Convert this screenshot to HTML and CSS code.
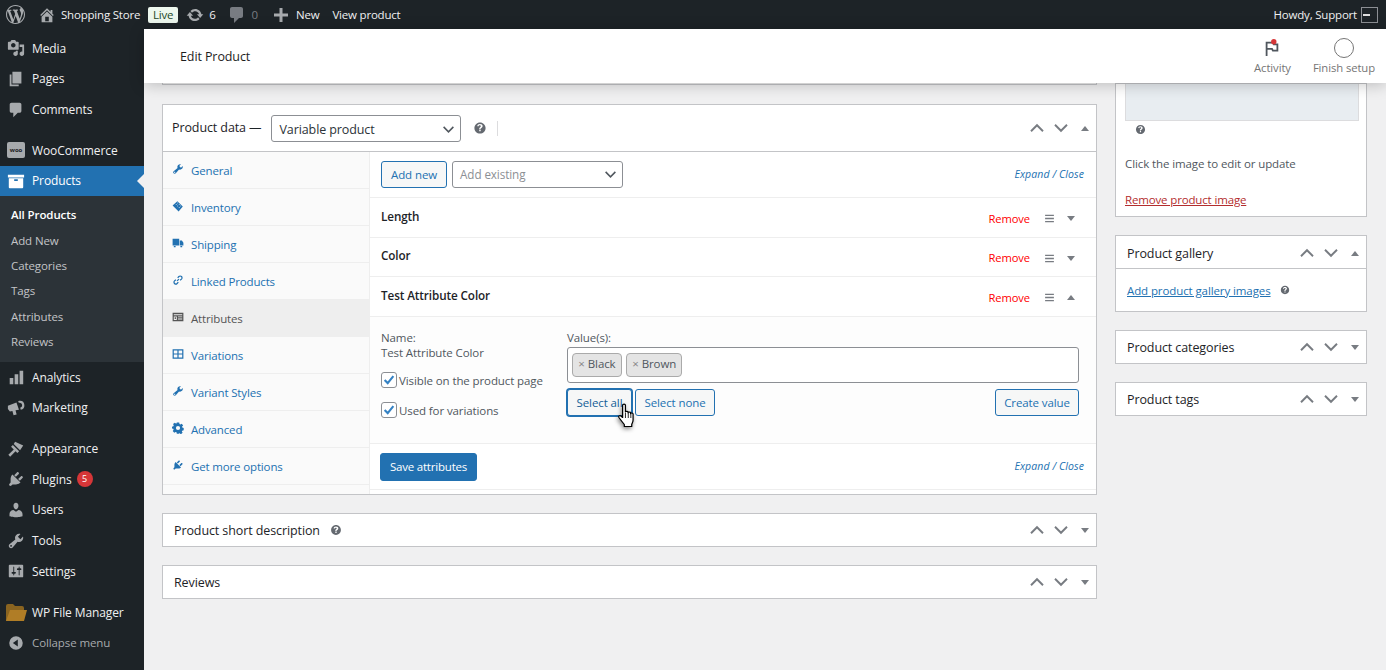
FILE: index.html
```html
<!DOCTYPE html>
<html lang="en">
  <head>
    <meta charset="UTF-8" />
    <meta name="viewport" content="width=device-width, initial-scale=1.0" />
    <title>Edit Product</title>
    <link rel="stylesheet" href="styles.css">
  </head>
  <body>
    <svg class="sprite" xmlns="http://www.w3.org/2000/svg">
      <symbol id="i-wp" viewBox="0 0 20 20"><path fill-rule="evenodd" d="M20 10c0-5.510-4.490-10-10-10C4.480 0 0 4.490 0 10c0 5.520 4.480 10 10 10 5.510 0 10-4.480 10-10zM7.780 15.370L4.370 6.220c.55-.02 1.170-.08 1.170-.08.5-.06.44-1.130-.06-1.110 0 0-1.450.11-2.370.11-.18 0-.37 0-.58-.01C4.120 2.690 6.890 1.110 10 1.110c2.330 0 4.450.87 6.050 2.340-.68-.11-1.650.39-1.650 1.580 0 .74.45 1.360.9 2.100.35.61.55 1.360.55 2.460 0 1.490-1.400 5-1.400 5l-3.030-8.370c.54-.02.82-.17.82-.17.5-.05.44-1.250-.06-1.220 0 0-1.440.12-2.380.12-.87 0-2.330-.12-2.330-.12-.5-.03-.56 1.200-.06 1.220l.92.08 1.260 3.410zM17.410 10c.24-.64.74-1.870.43-4.250.7 1.290 1.050 2.710 1.050 4.250 0 3.290-1.730 6.240-4.400 7.780.97-2.590 1.940-5.200 2.920-7.780zM6.100 18.090C3.120 16.650 1.110 13.530 1.110 10c0-1.300.23-2.480.72-3.590C3.250 10.300 4.670 14.200 6.100 18.090zm4.030-6.630l2.580 6.980c-.86.29-1.760.45-2.710.45-.79 0-1.570-.11-2.290-.33.81-2.380 1.620-4.740 2.420-7.100z"/></symbol>
      <symbol id="i-home" viewBox="0 0 20 20"><path fill-rule="evenodd" d="M16 8.500l1.530 1.530-1.060 1.060L10 4.620l-6.470 6.470-1.060-1.060L10 2.500l4 4v-2h2v4zm-6-2.460l6 5.990V18H4v-5.970zM12 17v-5H8v5h4z"/></symbol>
      <symbol id="i-update" viewBox="0 0 20 20"><path d="M10.200 3.280c3.530 0 6.430 2.610 6.920 6h2.080l-3.500 4-3.500-4h2.320c-.45-1.970-2.210-3.440-4.320-3.440-1.450 0-2.730.71-3.540 1.780L4.950 5.660C6.230 4.200 8.110 3.280 10.200 3.280zm-.4 13.440c-3.520 0-6.430-2.610-6.920-6H.8l3.500-4c1.170 1.330 2.330 2.670 3.500 4H5.480c.45 1.970 2.210 3.440 4.320 3.440 1.450 0 2.730-.71 3.540-1.780l1.710 1.950c-1.280 1.460-3.150 2.390-5.250 2.390z"/></symbol>
      <symbol id="i-comment" viewBox="0 0 20 20"><path d="M5 2h9c1.100 0 2 .9 2 2v7c0 1.100-.9 2-2 2h-2l-5 5v-5H5c-1.100 0-2-.9-2-2V4c0-1.100.9-2 2-2z"/></symbol>
      <symbol id="i-plus" viewBox="0 0 20 20"><path d="M17 8.500v3h-5.500V17h-3v-5.500H3v-3h5.500V3h3v5.500H17z"/></symbol>
      <symbol id="i-media" viewBox="0 0 20 20"><path fill-rule="evenodd" d="M13 11V4c0-.55-.45-1-1-1h-1.670L9 1H5L3.670 3H2c-.55 0-1 .45-1 1v7c0 .55.45 1 1 1h10c.55 0 1-.45 1-1zM7 4.500c1.380 0 2.500 1.120 2.500 2.500S8.380 9.500 7 9.500 4.500 8.380 4.500 7 5.620 4.500 7 4.500zM14 6h5v10.500c0 1.380-1.120 2.500-2.500 2.500S14 17.880 14 16.500s1.120-2.500 2.500-2.500c.17 0 .34.020.5.050V9h-3V6zm-4 8.050V13h2v3.500c0 1.380-1.120 2.500-2.500 2.500S7 17.880 7 16.500 8.120 14 9.500 14c.17 0 .34.020.5.050z"/></symbol>
      <symbol id="i-pages" viewBox="0 0 20 20"><path d="M6 15V2h10v13H6zm-1 1h8v2H3V5h2v11z"/></symbol>
      <symbol id="i-archive" viewBox="0 0 20 20"><path fill-rule="evenodd" d="M19 3H1v3h18V3zM2 7v10c0 .6.4 1 1 1h14c.6 0 1-.4 1-1V7H2zm10 3H8V8h4v2z"/></symbol>
      <symbol id="i-analytics" viewBox="0 0 20 20"><path d="M3 11h4v7H3zM8.500 7h4v11h-4zM14 3h4v15h-4z"/></symbol>
      <symbol id="i-marketing" viewBox="0 0 20 20"><path fill-rule="evenodd" d="M1 7.500l9.500-3.700 2.800 8.200-3.800.6 1.200 4.600-3.400.8-1.300-4.700-2.800.5L1 11V7.500zM14.500 2a5 5 0 0 1 .8 9.900l-.6-2.100a2.900 2.900 0 0 0-.5-5.700c-.4 0-.8.100-1.100.2l-.7-1.800c.6-.3 1.300-.5 2.100-.5z"/></symbol>
      <symbol id="i-brush" viewBox="0 0 20 20"><path d="M14.500 11.500L7.500 4.500 9 2l9 4-3.500 5.500zM6.500 5.500l7 7-2 2-2-2-6 6-2-2 6-6-3-3 2-2z"/></symbol>
      <symbol id="i-plugin" viewBox="0 0 20 20"><path d="M13.110 4.360L9.870 7.600 8 5.730l3.240-3.240c.35-.34 1.050-.2 1.560.32.52.51.66 1.210.31 1.550zm-8 1.770l.91-1.120 9.010 9.010-1.190.84c-.71.71-2.630 1.160-3.820 1.160H6.140L4.900 17.260c-.59.59-1.540.59-2.120 0-.59-.58-.59-1.530 0-2.120l1.240-1.240v-3.880c0-1.130.4-3.100 1.090-3.890zm7.260 3.970l3.240-3.240c.34-.35 1.040-.21 1.550.31.52.51.66 1.210.31 1.550l-3.240 3.250z"/></symbol>
      <symbol id="i-users" viewBox="0 0 20 20"><path d="M10 9.250c-2.270 0-2.730-3.440-2.730-3.440C7 4.020 7.820 2 9.970 2c2.160 0 2.980 2.020 2.710 3.810 0 0-.41 3.440-2.680 3.440zm0 2.570L12.720 10c2.390 0 4.520 2.330 4.520 4.530v2.490s-3.650 1.130-7.240 1.130c-3.650 0-7.240-1.130-7.240-1.130v-2.490c0-2.250 1.940-4.480 4.470-4.480z"/></symbol>
      <symbol id="i-tools" viewBox="0 0 20 20"><path fill-rule="evenodd" d="M16.680 9.770c-1.340 1.340-3.300 1.670-4.950.99l-5.410 6.520c-.99.99-2.590.99-3.580 0s-.99-2.590 0-3.580l6.520-5.420c-.68-1.650-.35-3.610.99-4.950 1.280-1.280 3.120-1.620 4.720-1.060l-2.890 2.890 2.820 2.820 2.860-2.870c.53 1.580.18 3.390-1.080 4.660zM3.810 16.210c.4.390 1.040.39 1.430 0 .4-.4.4-1.040 0-1.430-.39-.4-1.030-.4-1.430 0-.39.39-.39 1.030 0 1.430z"/></symbol>
      <symbol id="i-settings" viewBox="0 0 20 20"><path fill-rule="evenodd" d="M18 16V4c0-.55-.45-1-1-1H3c-.55 0-1 .45-1 1v12c0 .55.45 1 1 1h14c.55 0 1-.45 1-1zM8 11h1c.55 0 1 .45 1 1s-.45 1-1 1H8v1.500c0 .28-.22.5-.5.5s-.5-.22-.5-.5V13H6c-.55 0-1-.45-1-1s.45-1 1-1h1V5.500c0-.28.22-.5.5-.5s.5.22.5.5V11zm5-2h-1c-.55 0-1-.45-1-1s.45-1 1-1h1V5.500c0-.28.22-.5.5-.5s.5.22.5.5V7h1c.55 0 1 .45 1 1s-.45 1-1 1h-1v5.500c0 .28-.22.5-.5.5s-.5-.22-.5-.5V9z"/></symbol>
      <symbol id="i-collapse" viewBox="0 0 20 20"><path fill-rule="evenodd" d="M10 2.500a7.500 7.500 0 1 0 0 15 7.500 7.500 0 0 0 0-15zM12 6v8L6.500 10 12 6z"/></symbol>
      <symbol id="i-help" viewBox="0 0 20 20"><path fill-rule="evenodd" d="M17 10c0-3.870-3.140-7-7-7-3.870 0-7 3.130-7 7 0 3.860 3.130 7 7 7 3.860 0 7-3.140 7-7zm-6.300 1.480H9.060v-.48c0-.43.06-.78.2-1.050.13-.27.4-.58.8-.93.4-.33.64-.55.73-.66.14-.18.2-.39.2-.6 0-.3-.12-.55-.36-.76-.23-.21-.54-.32-.94-.32-.38 0-.69.11-.94.32-.25.2-.42.52-.51.94l-1.660-.21c.05-.76.37-1.410.97-1.950.6-.54 1.390-.81 2.370-.81 1.020 0 1.840.27 2.450.8.6.54.9 1.170.9 1.880 0 .4-.11.77-.34 1.120-.22.35-.7.83-1.430 1.440-.38.32-.62.57-.71.76-.1.19-.14.53-.13 1.020zM9.060 14.130V12.300h1.820v1.830H9.060z"/></symbol>
      <symbol id="i-inventory" viewBox="0 0 20 20"><path fill-rule="evenodd" d="M1 9l8-7 9 9-7 8-10-10zM6 7.500l1 1 1-1-1-1-1 1zm2.500 2.500l1 1 1-1-1-1-1 1zm2.500 2.500l1 1 1-1-1-1-1 1zM8.500 5l1 1 1-1-1-1-1 1zm2.500 2.500l1 1 1-1-1-1-1 1zm2.500 2.500l1 1 1-1-1-1-1 1z"/></symbol>
      <symbol id="i-truck" viewBox="0 0 20 20"><path d="M1 3h11v11H1zM13 6h3.500L19 9.500V14h-6zM3 15h3v2H3zM14 15h3v2h-3z"/></symbol>
      <symbol id="i-link" viewBox="0 0 20 20"><path fill="none" stroke="currentColor" stroke-width="2" d="M8.500 11.500l3-3M9.500 6.500l2-2.300a3 3 0 0 1 4.300 4.300l-2.300 2M10.500 13.500l-2 2.300a3 3 0 0 1-4.300-4.300l2.300-2"/></symbol>
      <symbol id="i-attr" viewBox="0 0 20 20"><path fill-rule="evenodd" d="M1 3h18v14H1V3zm2 2.500V7h14V5.500H3zM3 9v6h5V9H3zm7 0v1.500h7V9h-7zm0 3.500V14h7v-1.500h-7zM4.500 10.500h2v3h-2z"/></symbol>
      <symbol id="i-grid" viewBox="0 0 20 20"><path fill-rule="evenodd" d="M1 2h18v16H1V2zm2 2v5h6V4H3zm8 0v5h6V4h-6zM3 11v5h6v-5H3zm8 0v5h6v-5h-6z"/></symbol>
      <symbol id="i-gear" viewBox="0 0 20 20"><path fill-rule="evenodd" d="M8 1h4l.5 2.500 1.500.7 2.200-1.300 2.400 3-1.800 1.800.3 1.600 2.400.8v3.600l-2.500.7-.6 1.500 1.300 2.200-3 2.400-1.800-1.700-1.600.4L12 19.500H8l-.5-2.300-1.600-.7-2.100 1.300-2.600-3 1.500-1.800-.5-1.600L0 11V8l2.300-.8.6-1.600L1.700 3.500l3-2.400 1.800 1.500 1-.3L8 1zm2 5.500a3.500 3.500 0 1 0 0 7 3.500 3.500 0 0 0 0-7z"/></symbol>
      <symbol id="i-chev-up" viewBox="0 0 20 20"><path fill="none" stroke="currentColor" stroke-width="2.400" d="M2.500 14l7.500-7.500 7.500 7.500"/></symbol>
      <symbol id="i-chev-down" viewBox="0 0 20 20"><path fill="none" stroke="currentColor" stroke-width="2.400" d="M2.500 6l7.500 7.500 7.500-7.500"/></symbol>
      <symbol id="i-bars" viewBox="0 0 20 20"><path d="M2 3h16v2.600H2zM2 8.700h16v2.600H2zM2 14.400h16V17H2z"/></symbol>
    </svg>

    <header class="adminbar">
      <div class="bar-left">
        <svg class="bar-wp"><use href="#i-wp"/></svg>
        <a class="bar-item site"><svg class="bar-icon small"><use href="#i-home"/></svg>Shopping Store</a>
        <span class="live">Live</span>
        <a class="bar-item updates"><svg class="bar-icon small"><use href="#i-update"/></svg>6</a>
        <a class="bar-item dim"><svg class="bar-icon"><use href="#i-comment"/></svg>0</a>
        <a class="bar-item new"><svg class="bar-icon"><use href="#i-plus"/></svg>New</a>
        <a class="bar-item">View product</a>
      </div>
      <div class="bar-right">Howdy, Support <span class="avatar"><i></i></span></div>
    </header>

    <div class="layout">
      <nav class="sidebar">
        <a class="menu-item"><svg><use href="#i-media"/></svg>Media</a>
        <a class="menu-item"><svg><use href="#i-pages"/></svg>Pages</a>
        <a class="menu-item"><svg><use href="#i-comment"/></svg>Comments</a>
        <div class="menu-sep"></div>
        <a class="menu-item"><span class="woo-logo">woo</span>WooCommerce</a>
        <a class="menu-item current"><svg><use href="#i-archive"/></svg>Products</a>
        <ul class="submenu">
          <li class="active">All Products</li>
          <li>Add New</li>
          <li>Categories</li>
          <li>Tags</li>
          <li>Attributes</li>
          <li>Reviews</li>
        </ul>
        <a class="menu-item"><svg><use href="#i-analytics"/></svg>Analytics</a>
        <a class="menu-item"><svg><use href="#i-marketing"/></svg>Marketing</a>
        <div class="menu-sep"></div>
        <a class="menu-item"><svg><use href="#i-brush"/></svg>Appearance</a>
        <a class="menu-item"><svg><use href="#i-plugin"/></svg>Plugins <span class="count">5</span></a>
        <a class="menu-item"><svg><use href="#i-users"/></svg>Users</a>
        <a class="menu-item"><svg><use href="#i-tools"/></svg>Tools</a>
        <a class="menu-item"><svg><use href="#i-settings"/></svg>Settings</a>
        <div class="menu-sep"></div>
        <a class="menu-item"><svg class="folder" viewBox="0 0 21 17"><path fill="#8a6420" d="M0 2a2 2 0 0 1 2-2h5l2 2h7a2 2 0 0 1 2 2v13H0z"/><path fill="#b07d26" d="M4 6h17l-3 11H0z"/></svg>WP File Manager</a>
        <a class="menu-item collapse"><svg><use href="#i-collapse"/></svg>Collapse menu</a>
      </nav>

      <div class="main">
        <div class="wc-header">
          <h1>Edit Product</h1>
          <div class="wc-actions">
            <a class="wc-action">
              <svg class="flag" viewBox="0 0 20 20"><path fill="none" stroke="#50575e" stroke-width="2" d="M4 19V4h7l1 2h4v7h-5l-1-2H4"/><circle cx="12" cy="3" r="3" fill="#d63638"/></svg>
              Activity
            </a>
            <a class="wc-action">
              <span class="ring"></span>
              Finish setup
            </a>
          </div>
        </div>

        <div class="columns">
          <div class="col-left">
            <div class="stub"></div>

            <section class="postbox">
              <div class="pd-head">
                <span class="pd-label">Product data —</span>
                <span class="select type-select">Variable product<svg class="caret"><use href="#i-chev-down"/></svg></span>
                <svg class="help"><use href="#i-help"/></svg>
                <span class="pd-rule"></span>
                <span class="handles">
                  <svg><use href="#i-chev-up"/></svg>
                  <svg><use href="#i-chev-down"/></svg>
                  <b class="tri up"></b>
                </span>
              </div>
              <div class="pd-body">
                <ul class="tabs">
                  <li><svg><use href="#i-tools"/></svg>General</li>
                  <li><svg><use href="#i-inventory"/></svg>Inventory</li>
                  <li><svg><use href="#i-truck"/></svg>Shipping</li>
                  <li><svg><use href="#i-link"/></svg>Linked Products</li>
                  <li class="on"><svg><use href="#i-attr"/></svg>Attributes</li>
                  <li><svg><use href="#i-grid"/></svg>Variations</li>
                  <li><svg><use href="#i-tools"/></svg>Variant Styles</li>
                  <li><svg><use href="#i-gear"/></svg>Advanced</li>
                  <li><svg><use href="#i-plugin"/></svg>Get more options</li>
                </ul>
                <div class="panel">
                  <div class="toolbar">
                    <button class="btn">Add new</button>
                    <span class="select existing">Add existing<svg class="caret"><use href="#i-chev-down"/></svg></span>
                    <span class="expand">Expand / Close</span>
                  </div>

                  <div class="attr-row">
                    <strong>Length</strong>
                    <a class="remove">Remove</a>
                    <svg class="sort"><use href="#i-bars"/></svg>
                    <b class="tri down"></b>
                  </div>
                  <div class="attr-row short">
                    <strong>Color</strong>
                    <a class="remove">Remove</a>
                    <svg class="sort"><use href="#i-bars"/></svg>
                    <b class="tri down"></b>
                  </div>
                  <div class="attr-row">
                    <strong>Test Attribute Color</strong>
                    <a class="remove">Remove</a>
                    <svg class="sort"><use href="#i-bars"/></svg>
                    <b class="tri up"></b>
                  </div>

                  <div class="attr-body">
                    <div class="attr-name">
                      <div class="name-label">Name:<br><span>Test Attribute Color</span></div>
                      <label class="check"><span class="box"><svg viewBox="0 0 16 16"><path fill="none" stroke="#3582c4" stroke-width="2.400" d="M3 8l3.500 3.500L13 3.500"/></svg></span>Visible on the product page</label>
                      <label class="check"><span class="box"><svg viewBox="0 0 16 16"><path fill="none" stroke="#3582c4" stroke-width="2.400" d="M3 8l3.500 3.500L13 3.500"/></svg></span>Used for variations</label>
                    </div>
                    <div class="attr-values">
                      <div class="values-label">Value(s):</div>
                      <div class="values-box">
                        <span class="chip"><i>×</i>Black</span>
                        <span class="chip"><i>×</i>Brown</span>
                      </div>
                      <div class="value-btns">
                        <button class="btn focus">Select all</button>
                        <button class="btn none">Select none</button>
                        <button class="btn create">Create value</button>
                      </div>
                      <svg class="cursor" viewBox="0 0 16 25" preserveAspectRatio="none"><path fill="#fff" stroke="#000" stroke-width="1.100" stroke-linejoin="round" d="M5 2.200c0-1.500 2.500-1.500 2.500 0V9c0-1 2.300-1 2.300 0v.8c0-1 2.300-1 2.300 0v.9c0-1 2.200-.9 2.200.3v6c0 2-.7 3-1.200 4.200v2.300H6.500v-2C5 19.500 3 16.500 1.700 14.500c-.8-1.300.8-2.500 1.800-1.500L5 14.500V2.200z"/><path fill="none" stroke="#000" stroke-width=".8" d="M7.500 10v5M10 10v5M12.300 10.500v4.500"/></svg>
                    </div>
                  </div>

                  <div class="toolbar save">
                    <button class="btn primary">Save attributes</button>
                    <span class="expand">Expand / Close</span>
                  </div>
                </div>
              </div>
            </section>

            <section class="postbox bar-box">
              <h2>Product short description <svg class="help"><use href="#i-help"/></svg></h2>
              <span class="handles">
                <svg><use href="#i-chev-up"/></svg>
                <svg><use href="#i-chev-down"/></svg>
                <b class="tri down"></b>
              </span>
            </section>
            <section class="postbox bar-box">
              <h2>Reviews</h2>
              <span class="handles">
                <svg><use href="#i-chev-up"/></svg>
                <svg><use href="#i-chev-down"/></svg>
                <b class="tri down"></b>
              </span>
            </section>
          </div>

          <aside class="col-right">
            <section class="postbox image-box">
              <div class="thumb"></div>
              <svg class="help thumb-help"><use href="#i-help"/></svg>
              <p class="hint">Click the image to edit or update</p>
              <a class="remove-image">Remove product image</a>
            </section>

            <section class="postbox">
              <div class="bar-box inner">
                <h2>Product gallery</h2>
                <span class="handles">
                  <svg><use href="#i-chev-up"/></svg>
                  <svg><use href="#i-chev-down"/></svg>
                  <b class="tri up"></b>
                </span>
              </div>
              <div class="gallery-body"><a>Add product gallery images</a><svg class="help"><use href="#i-help"/></svg></div>
            </section>

            <section class="postbox bar-box">
              <h2>Product categories</h2>
              <span class="handles">
                <svg><use href="#i-chev-up"/></svg>
                <svg><use href="#i-chev-down"/></svg>
                <b class="tri down"></b>
              </span>
            </section>
            <section class="postbox bar-box">
              <h2>Product tags</h2>
              <span class="handles">
                <svg><use href="#i-chev-up"/></svg>
                <svg><use href="#i-chev-down"/></svg>
                <b class="tri down"></b>
              </span>
            </section>
          </aside>
        </div>
      </div>
    </div>
  </body>
</html>
```

FILE: styles.css
```css
* {
  box-sizing: border-box;
}
html,
body {
  margin: 0;
  height: 670px;
  overflow: hidden;
}
body {
  background-color: #f0f0f1;
  color: #3c434a;
  font-family: "Open Sans", "Noto Sans", sans-serif;
  font-size: 12px;
  letter-spacing: -0.1px;
}
a {
  color: inherit;
}
ul {
  list-style: none;
  margin: 0;
  padding: 0;
}
.sprite {
  display: none;
}

/* admin bar */
.adminbar {
  height: 29px;
  background-color: #1d2327;
  color: #f0f0f1;
  display: flex;
  justify-content: space-between;
  align-items: center;
  padding: 0 8px 0 6px;
  font-size: 11.5px;
  letter-spacing: -0.2px;
}
.bar-left {
  display: flex;
  align-items: center;
}
.bar-wp {
  width: 19px;
  height: 19px;
  fill: #a7aaad;
  margin-right: 13px;
}
.bar-item {
  display: flex;
  align-items: center;
  margin-right: 13px;
}
.bar-item.site {
  margin-right: 8px;
}
.bar-item.updates {
  margin-right: 11px;
}
.bar-item.new .bar-icon {
  margin-right: 5px;
}
.bar-icon {
  width: 20px;
  height: 20px;
  fill: #a7aaad;
  margin-right: 5px;
}
.bar-icon.small {
  width: 18px;
  height: 18px;
}
.bar-item.dim {
  color: #787c82;
}
.bar-item.dim .bar-icon {
  fill: #787c82;
}
.live {
  background-color: #edf7ee;
  color: #1d4a28;
  border-radius: 2px;
  width: 30px;
  text-align: center;
  height: 16px;
  line-height: 15px;
  margin-right: 8px;
}
.bar-right {
  display: flex;
  align-items: center;
  gap: 4px;
}
.avatar {
  width: 17px;
  height: 16px;
  background-color: #1d2327;
  border: 1px solid #8c8f94;
  display: flex;
  align-items: center;
  padding: 0 1px;
}
.avatar i {
  width: 7px;
  height: 2px;
  background-color: #ddd;
}

/* side menu */
.layout {
  display: flex;
  height: 641px;
}
.sidebar {
  width: 144px;
  flex-shrink: 0;
  background-color: #1d2327;
  color: #f0f0f1;
  padding-top: 3.8px;
}
.menu-item {
  display: flex;
  align-items: center;
  height: 30.7px;
  padding-left: 7px;
  gap: 7px;
  position: relative;
}
.menu-item svg {
  width: 18px;
  height: 18px;
  fill: #a7aaad;
  flex-shrink: 0;
}
.menu-sep {
  height: 10px;
}
.menu-item.current {
  background-color: #2271b1;
  color: #fff;
  height: 30px;
}
.menu-item.current svg {
  fill: #fff;
}
.menu-item.current::after {
  content: "";
  position: absolute;
  right: 0;
  top: 8px;
  border: 7px solid transparent;
  border-right-color: #f0f0f1;
  border-left-width: 0;
}
.woo-logo {
  width: 18px;
  height: 16px;
  background-color: #a7aaad;
  color: #1d2327;
  border-radius: 2px;
  font-size: 6px;
  font-weight: 700;
  line-height: 16px;
  text-align: center;
  flex-shrink: 0;
}
.submenu {
  background-color: #2c3338;
  color: #c3c4c7;
  padding: 6.7px 0 7.3px;
  font-size: 11.5px;
}
.submenu li {
  height: 25.4px;
  line-height: 25px;
  padding-left: 11px;
}
.submenu .active {
  color: #fff;
  font-weight: 600;
}
.count {
  background-color: #d63638;
  color: #fff;
  font-size: 9px;
  width: 16px;
  height: 16px;
  border-radius: 50%;
  text-align: center;
  line-height: 16px;
  margin-left: -2px;
}
.menu-item .folder {
  width: 21px;
  height: 17px;
  margin-left: -1px;
  margin-right: -2px;
}
.collapse {
  color: #a7aaad;
  font-size: 11.5px;
}

/* woocommerce header */
.main {
  flex: 1;
  min-width: 0;
}
.wc-header {
  height: 54px;
  background-color: #fff;
  box-shadow: 0 2px 14px rgba(0, 0, 0, 0.22);
  display: flex;
  justify-content: space-between;
  position: relative;
  z-index: 2;
  padding: 0 11px 0 36px;
}
.wc-header h1 {
  margin: 0;
  color: #1e1e1e;
  font-size: 12.5px;
  font-weight: 400;
  line-height: 56px;
}
.wc-actions {
  display: flex;
  gap: 22px;
}
.wc-action {
  display: flex;
  flex-direction: column;
  align-items: center;
  justify-content: flex-end;
  height: 47px;
  color: #757575;
  font-size: 11.3px;
  line-height: 16px;
  gap: 2px;
}
.flag {
  width: 18px;
  height: 20px;
}
.ring {
  width: 20px;
  height: 20px;
  border: 1.5px solid #757575;
  border-radius: 50%;
}

/* columns */
.columns {
  display: flex;
  padding-left: 18px;
  gap: 18px;
}
.col-left {
  width: 935px;
  flex-shrink: 0;
}
.col-right {
  width: 252px;
  flex-shrink: 0;
}
.stub {
  height: 2px;
  border: 1px solid #c3c4c7;
  border-top: 0;
  margin-bottom: 19px;
}
.postbox {
  background-color: #fff;
  border: 1px solid #c3c4c7;
  margin-bottom: 18px;
}
.handles {
  display: flex;
  align-items: center;
  gap: 8px;
  color: #787c82;
  margin-left: auto;
}
.handles svg {
  width: 16px;
  height: 16px;
}
.tri {
  display: block;
  width: 0;
  height: 0;
  border-left: 4px solid transparent;
  border-right: 4px solid transparent;
}
.tri.up {
  border-bottom: 5px solid #787c82;
}
.tri.down {
  border-top: 5px solid #787c82;
}
.handles .tri {
  margin-left: 4px;
}
.help {
  width: 16px;
  height: 16px;
  fill: #646970;
  flex-shrink: 0;
}

/* product data */
.pd-head {
  height: 47px;
  border-bottom: 1px solid #c3c4c7;
  display: flex;
  align-items: center;
  padding: 0 7px 0 9px;
  color: #1d2327;
}
.pd-label {
  font-size: 12.5px;
  margin: -2px 9px 0 0;
}
.select {
  display: flex;
  align-items: center;
  justify-content: space-between;
  background-color: #fff;
  border: 1px solid #8c8f94;
  border-radius: 3px;
  height: 27px;
  padding: 0 5px 0 8px;
}
.type-select {
  width: 190px;
  color: #2c3338;
  font-size: 12.5px;
  padding-top: 2px;
}
.caret {
  width: 13px;
  height: 13px;
  color: #50575e;
}
.pd-head .help {
  margin-left: 11px;
}
.pd-rule {
  width: 1px;
  height: 15px;
  background-color: #dcdcde;
  margin-left: 9px;
}
.pd-body {
  display: flex;
}
.tabs {
  width: 207px;
  background-color: #fafafa;
  border-right: 1px solid #eee;
  color: #2271b1;
  flex-shrink: 0;
}
.tabs li {
  height: 37px;
  border-bottom: 1px solid #eee;
  display: flex;
  align-items: center;
  padding: 0 0 0 9px;
  gap: 7px;
  font-size: 11.5px;
  letter-spacing: -0.15px;
}
.tabs svg {
  width: 12px;
  height: 12px;
  fill: #2271b1;
  margin-top: -3px;
  flex-shrink: 0;
}
.tabs .on {
  background-color: #eee;
  color: #555;
}
.tabs .on svg {
  fill: #555;
}
.panel {
  flex: 1;
  min-width: 0;
  padding-bottom: 4px;
}
.toolbar {
  height: 46px;
  display: flex;
  align-items: center;
  padding: 0 12px 0 11px;
  border-bottom: 1px solid #eee;
  gap: 5px;
}
.btn {
  font-family: inherit;
  font-size: 11.5px;
  letter-spacing: inherit;
  height: 27px;
  padding: 0 9px;
  background-color: #f6f7f7;
  border: 1px solid #2271b1;
  border-radius: 3px;
  color: #2271b1;
}
.existing {
  width: 171px;
  color: #8c8f94;
  font-size: 11.7px;
  padding-left: 7px;
  padding-bottom: 1px;
}
.existing .caret {
  margin-top: 1px;
}
.expand {
  margin: -2px 0 0 auto;
  color: #2271b1;
  font-size: 10.5px;
  font-style: italic;
  letter-spacing: 0.1px;
}
.attr-row {
  height: 40px;
  display: flex;
  align-items: center;
  padding: 0 21px 4px 11px;
  border-bottom: 1px solid #eee;
  color: #1d2327;
}
.attr-row.short {
  height: 39px;
}
.attr-row strong {
  font-weight: 600;
  font-size: 11.7px;
}
.remove {
  margin-left: auto;
  color: #f00;
  font-size: 11.2px;
  margin-top: 5px;
}
.sort {
  width: 11px;
  height: 11px;
  fill: #787c82;
  margin: 6px 0 0 14px;
}
.attr-row .tri {
  margin: 6px 0 0 12px;
}
.attr-body {
  height: 127px;
  background-color: #fdfdfd;
  border-bottom: 1px solid #eee;
  display: flex;
  padding: 13px 17px 0 11px;
  color: #50575e;
  font-size: 11.5px;
}
.attr-name {
  width: 186px;
  flex-shrink: 0;
}
.name-label {
  line-height: 15px;
}
.check {
  display: flex;
  align-items: center;
  gap: 2px;
  height: 16px;
  margin-top: 13px;
}
.name-label + .check {
  margin-top: 12px;
}
.check + .check {
  margin-top: 14px;
}
.box {
  width: 16px;
  height: 16px;
  background-color: #fff;
  border: 1px solid #8c8f94;
  border-radius: 3px;
  display: block;
  flex-shrink: 0;
}
.box svg {
  display: block;
  width: 14px;
  height: 14px;
}
.attr-values {
  flex: 1;
  position: relative;
}
.values-label {
  line-height: 15px;
  margin-bottom: 2px;
}
.values-box {
  height: 36px;
  background-color: #fff;
  border: 1px solid #8c8f94;
  border-radius: 3px;
  display: flex;
  align-items: center;
  gap: 4px;
  padding: 0 4px;
}
.chip {
  height: 24px;
  line-height: 20px;
  background-color: #e4e4e4;
  border: 1px solid #aaa;
  border-radius: 4px;
  padding: 0 5.3px;
  color: #50575e;
}
.chip i {
  font-style: normal;
  color: #888;
  margin-right: 3px;
}
.value-btns {
  display: flex;
  gap: 3px;
  margin-top: 6px;
}
.btn.focus {
  width: 65px;
  padding: 0;
  background-color: #f6f7f7;
  color: #135e96;
  box-shadow: 0 0 0 1px #2271b1;
}
.btn.none {
  width: 80px;
  padding: 0;
}
.btn.create {
  width: 84px;
  padding: 0;
  margin-left: auto;
}
.cursor {
  position: absolute;
  left: 50px;
  top: 73px;
  width: 18px;
  height: 25px;
  filter: drop-shadow(-1px 2px 2px rgba(0, 0, 0, 0.45));
}
.toolbar.save {
  height: 46px;
  padding-left: 10px;
}
.btn.primary {
  background-color: #2271b1;
  color: #fff;
  width: 97px;
  height: 28px;
  padding: 0;
  letter-spacing: -0.2px;
}

/* collapsed boxes */
.bar-box {
  height: 34px;
  display: flex;
  align-items: center;
  padding: 0 7px 0 11px;
}
.bar-box h2 {
  margin: 0;
  color: #1d2327;
  font-size: 12.5px;
  font-weight: 400;
  display: flex;
  align-items: center;
  gap: 9px;
}
.bar-box .help {
  width: 14px;
  height: 14px;
}

/* sidebar boxes */
.image-box {
  height: 134px;
  padding: 0 7px 0 9px;
  color: #50575e;
  font-size: 11.5px;
}
.thumb {
  height: 37px;
  background-color: #e8edf1;
  border: 1px solid #dcdcde;
  border-top: 0;
}
.thumb-help {
  display: block;
  width: 13px;
  height: 13px;
  margin: 2px 0 0 9px;
}
.hint {
  margin: 20px 0 0;
}
.remove-image {
  display: block;
  margin-top: 21px;
  color: #b32d2e;
  text-decoration: underline;
  letter-spacing: -0.15px;
}
.inner {
  border-bottom: 1px solid #c3c4c7;
  height: 33px;
  padding-top: 2px;
}
.gallery-body {
  height: 42px;
  display: flex;
  align-items: center;
  gap: 8px;
  padding: 0 0 0 11px;
  color: #2271b1;
  font-size: 11.5px;
}
.gallery-body a {
  text-decoration: underline;
}
.gallery-body .help {
  width: 12px;
  height: 12px;
}
```
